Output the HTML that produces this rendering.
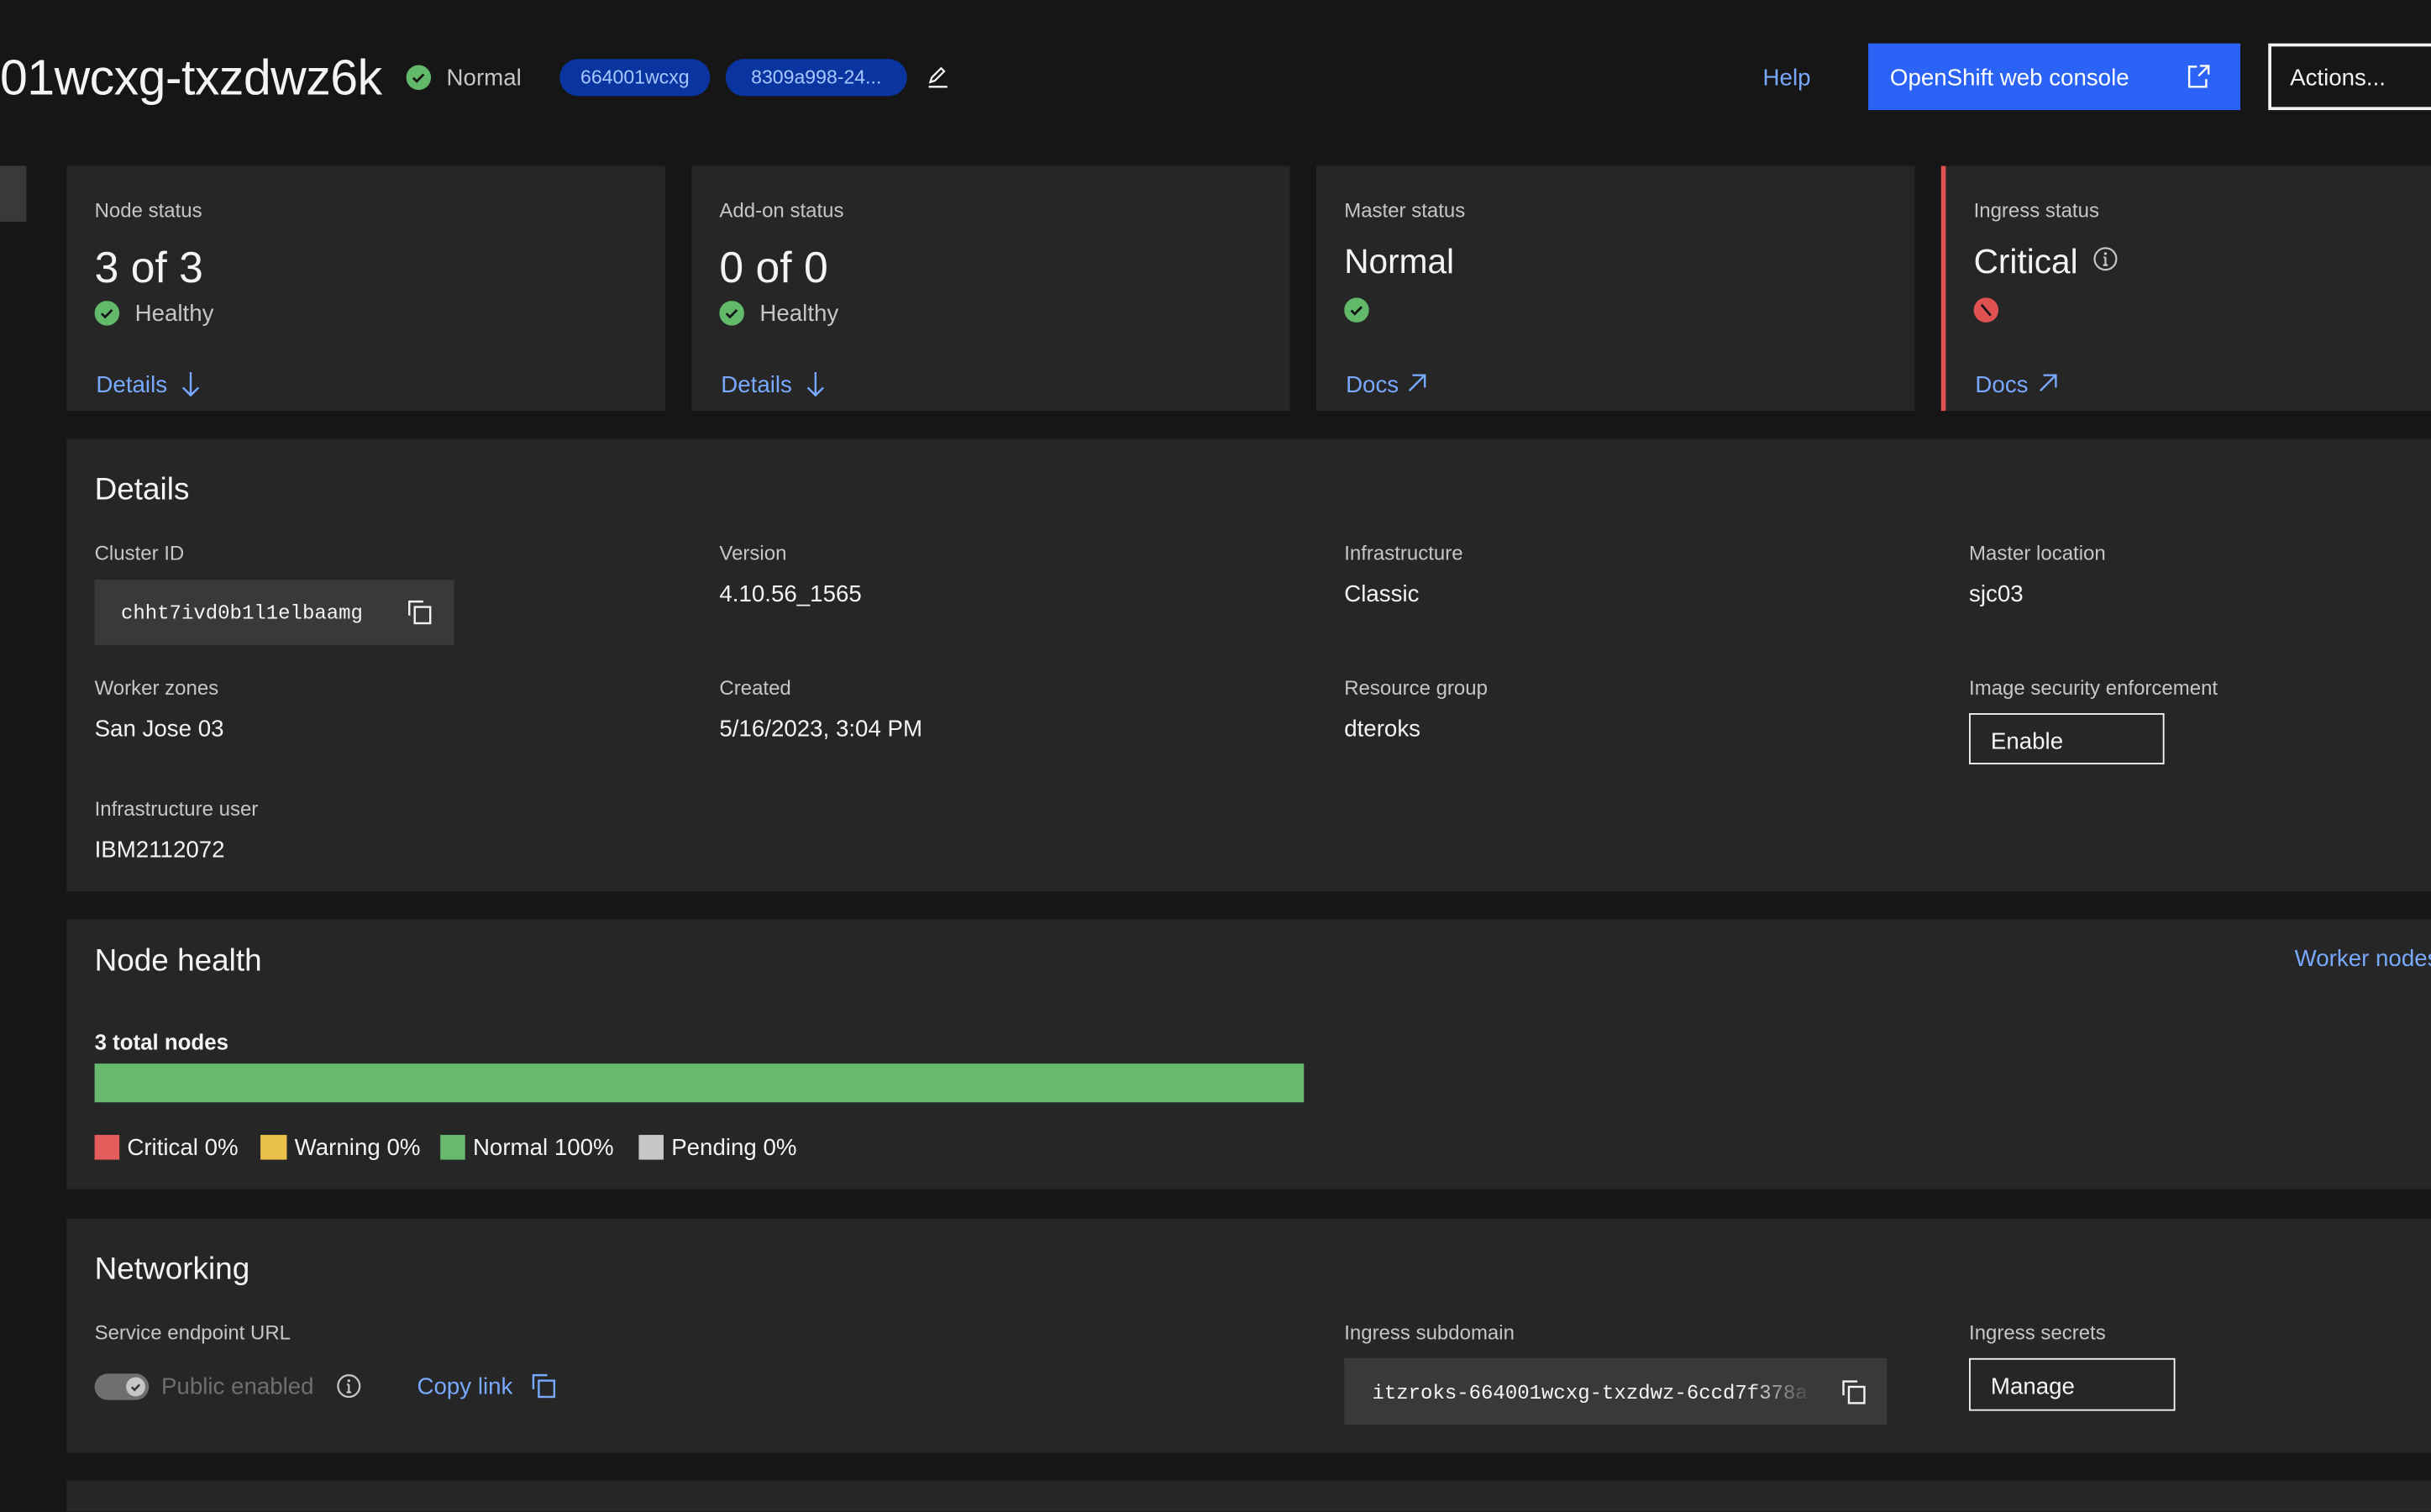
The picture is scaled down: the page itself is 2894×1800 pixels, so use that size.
<!DOCTYPE html>
<html><head><meta charset="utf-8">
<style>
html,body{margin:0;padding:0;background:#161616;overflow:hidden;width:2894px;height:1784px}
#s{position:absolute;left:0;top:0;width:1568px;height:967px;transform:scale(1.8457);transform-origin:0 0;font-family:"Liberation Sans",sans-serif;color:#f4f4f4}
.a{position:absolute;white-space:nowrap}
.card{position:absolute;background:#262626}
.lbl{position:absolute;font-size:13px;color:#c6c6c6;line-height:16px;white-space:nowrap}
.val{position:absolute;font-size:15px;color:#f4f4f4;line-height:18px;white-space:nowrap}
.lnk{color:#78a9ff}
.mono{font-family:"Liberation Mono",monospace}
</style></head><body><div id="s">
<div class="a" style="left:0;top:31px;font-size:32px;line-height:38px;letter-spacing:-0.3px">01wcxg-txzdwz6k</div>
<svg class="a" style="left:262px;top:42px" width="16" height="16"><circle cx="8" cy="8" r="8" fill="#62b96a"/><path d="M4.5 8.2l2.3 2.3 4.5-4.6" stroke="#161616" stroke-width="1.5" fill="none"/></svg>
<div class="a" style="left:288px;top:42px;font-size:15px;color:#c6c6c6;line-height:18px">Normal</div>
<div class="a" style="left:361px;top:38px;width:97px;height:24px;border-radius:12px;background:#0a34a0;color:#a6c8ff;font-size:12.5px;line-height:25px;text-align:center">664001wcxg</div>
<div class="a" style="left:468px;top:38px;width:117px;height:24px;border-radius:12px;background:#0a34a0;color:#a6c8ff;font-size:12.5px;line-height:25px;text-align:center">8309a998-24...</div>
<svg class="a" style="left:597px;top:41px" width="16" height="16"><path d="M3 12l1-3 6-6 2 2-6 6z" stroke="#f4f4f4" stroke-width="1.2" fill="none"/><path d="M2 15h12" stroke="#f4f4f4" stroke-width="1.3"/></svg>
<div class="a lnk" style="left:1137px;top:42px;font-size:15px;line-height:18px">Help</div>
<div class="a" style="left:1205px;top:28px;width:240px;height:43px;background:#2a63f5"></div>
<div class="a" style="left:1219px;top:42px;font-size:15px;line-height:18px;color:#fff">OpenShift web console</div>
<svg class="a" style="left:1410px;top:41px" width="16" height="16"><path d="M7 2H2v13h11v-5" stroke="#fff" stroke-width="1.3" fill="none"/><path d="M9 1.5h5.5V7M14.5 1.5L8 8" stroke="#fff" stroke-width="1.3" fill="none"/></svg>
<div class="a" style="left:1463px;top:28px;width:120px;height:39px;border:2px solid #f4f4f4"></div>
<div class="a" style="left:1477px;top:42px;font-size:15px;line-height:18px">Actions...</div>

<div class="a" style="left:0;top:107px;width:17px;height:36px;background:#393939"></div>

<div class="card" style="left:43px;top:107px;width:386px;height:158px"></div>
<div class="card" style="left:446px;top:107px;width:386px;height:158px"></div>
<div class="card" style="left:849px;top:107px;width:386px;height:158px"></div>
<div class="card" style="left:1252px;top:107px;width:330px;height:158px;border-left:3px solid #e05252;box-sizing:border-box"></div>

<div class="lbl" style="left:61px;top:128px">Node status</div>
<div class="a" style="left:61px;top:157px;font-size:28px;line-height:32px">3 of 3</div>
<svg class="a" style="left:61px;top:194px" width="16" height="16"><circle cx="8" cy="8" r="8" fill="#62b96a"/><path d="M4.5 8.2l2.3 2.3 4.5-4.6" stroke="#161616" stroke-width="1.5" fill="none"/></svg>
<div class="a" style="left:87px;top:194px;font-size:15px;color:#c6c6c6;line-height:18px">Healthy</div>
<div class="a lnk" style="left:62px;top:240px;font-size:15px;line-height:18px">Details</div>
<svg class="a" style="left:116px;top:239px" width="14" height="18"><path d="M7 1v15M2 11l5 5 5-5" stroke="#78a9ff" stroke-width="1.3" fill="none"/></svg>

<div class="lbl" style="left:464px;top:128px">Add-on status</div>
<div class="a" style="left:464px;top:157px;font-size:28px;line-height:32px">0 of 0</div>
<svg class="a" style="left:464px;top:194px" width="16" height="16"><circle cx="8" cy="8" r="8" fill="#62b96a"/><path d="M4.5 8.2l2.3 2.3 4.5-4.6" stroke="#161616" stroke-width="1.5" fill="none"/></svg>
<div class="a" style="left:490px;top:194px;font-size:15px;color:#c6c6c6;line-height:18px">Healthy</div>
<div class="a lnk" style="left:465px;top:240px;font-size:15px;line-height:18px">Details</div>
<svg class="a" style="left:519px;top:239px" width="14" height="18"><path d="M7 1v15M2 11l5 5 5-5" stroke="#78a9ff" stroke-width="1.3" fill="none"/></svg>

<div class="lbl" style="left:867px;top:128px">Master status</div>
<div class="a" style="left:867px;top:156px;font-size:22px;line-height:26px">Normal</div>
<svg class="a" style="left:867px;top:192px" width="16" height="16"><circle cx="8" cy="8" r="8" fill="#62b96a"/><path d="M4.5 8.2l2.3 2.3 4.5-4.6" stroke="#161616" stroke-width="1.5" fill="none"/></svg>
<div class="a lnk" style="left:868px;top:240px;font-size:15px;line-height:18px">Docs</div>
<svg class="a" style="left:907px;top:240px" width="14" height="14"><path d="M2 12L12 2M4 2h8v8" stroke="#78a9ff" stroke-width="1.3" fill="none"/></svg>

<div class="lbl" style="left:1273px;top:128px">Ingress status</div>
<div class="a" style="left:1273px;top:156px;font-size:22px;line-height:26px">Critical</div>
<svg class="a" style="left:1350px;top:159px" width="16" height="16"><circle cx="8" cy="8" r="7" stroke="#c6c6c6" stroke-width="1.2" fill="none"/><path d="M8 7v5M6.5 12h3M6.8 7h1.2" stroke="#c6c6c6" stroke-width="1.2"/><circle cx="8" cy="4.6" r="0.9" fill="#c6c6c6"/></svg>
<svg class="a" style="left:1273px;top:192px" width="16" height="16"><circle cx="8" cy="8" r="8" fill="#e05252"/><path d="M5 4.5l6 7" stroke="#161616" stroke-width="1.5"/></svg>
<div class="a lnk" style="left:1274px;top:240px;font-size:15px;line-height:18px">Docs</div>
<svg class="a" style="left:1314px;top:240px" width="14" height="14"><path d="M2 12L12 2M4 2h8v8" stroke="#78a9ff" stroke-width="1.3" fill="none"/></svg>

<div class="card" style="left:43px;top:283px;width:1540px;height:292px"></div>
<div class="a" style="left:61px;top:304px;font-size:20px;line-height:24px">Details</div>
<div class="lbl" style="left:61px;top:349px">Cluster ID</div>
<div class="a" style="left:61px;top:374px;width:232px;height:42px;background:#393939"></div>
<div class="a mono" style="left:78px;top:388px;font-size:13px;line-height:16px">chht7ivd0b1l1elbaamg</div>
<svg class="a" style="left:263px;top:387px" width="16" height="16"><path d="M1 10V1h9" stroke="#f4f4f4" stroke-width="1.3" fill="none"/><rect x="4.5" y="4.5" width="10" height="10.5" stroke="#f4f4f4" stroke-width="1.3" fill="none"/></svg>
<div class="lbl" style="left:464px;top:349px">Version</div>
<div class="val" style="left:464px;top:375px">4.10.56_1565</div>
<div class="lbl" style="left:867px;top:349px">Infrastructure</div>
<div class="val" style="left:867px;top:375px">Classic</div>
<div class="lbl" style="left:1270px;top:349px">Master location</div>
<div class="val" style="left:1270px;top:375px">sjc03</div>
<div class="lbl" style="left:61px;top:436px">Worker zones</div>
<div class="val" style="left:61px;top:462px">San Jose 03</div>
<div class="lbl" style="left:464px;top:436px">Created</div>
<div class="val" style="left:464px;top:462px">5/16/2023, 3:04 PM</div>
<div class="lbl" style="left:867px;top:436px">Resource group</div>
<div class="val" style="left:867px;top:462px">dteroks</div>
<div class="lbl" style="left:1270px;top:436px">Image security enforcement</div>
<div class="a" style="left:1270px;top:460px;width:124px;height:31px;border:1.5px solid #f4f4f4"></div>
<div class="val" style="left:1284px;top:470px">Enable</div>
<div class="lbl" style="left:61px;top:514px">Infrastructure user</div>
<div class="val" style="left:61px;top:540px">IBM2112072</div>

<div class="card" style="left:43px;top:593px;width:1540px;height:174px"></div>
<div class="a" style="left:61px;top:608px;font-size:20px;line-height:24px">Node health</div>
<div class="a lnk" style="left:1480px;top:610px;font-size:15px;line-height:18px">Worker nodes</div>
<div class="a" style="left:61px;top:664px;font-size:14px;font-weight:bold;line-height:17px">3 total nodes</div>
<div class="a" style="left:61px;top:686px;width:780px;height:25px;background:#67b96e"></div>
<div class="a" style="left:61px;top:732px;width:16px;height:16px;background:#e55c5c"></div>
<div class="val" style="left:82px;top:732px">Critical 0%</div>
<div class="a" style="left:168px;top:732px;width:17px;height:16px;background:#e8c04a"></div>
<div class="val" style="left:190px;top:732px">Warning 0%</div>
<div class="a" style="left:284px;top:732px;width:16px;height:16px;background:#67b96e"></div>
<div class="val" style="left:305px;top:732px">Normal 100%</div>
<div class="a" style="left:412px;top:732px;width:16px;height:16px;background:#c6c6c6"></div>
<div class="val" style="left:433px;top:732px">Pending 0%</div>

<div class="card" style="left:43px;top:786px;width:1540px;height:151px"></div>
<div class="a" style="left:61px;top:807px;font-size:20px;line-height:24px">Networking</div>
<div class="lbl" style="left:61px;top:852px">Service endpoint URL</div>
<div class="a" style="left:61px;top:886px;width:35px;height:17px;border-radius:9px;background:#6f6f6f"></div>
<svg class="a" style="left:81px;top:888px" width="13" height="13"><circle cx="6.5" cy="6.5" r="6.2" fill="#c6c6c6"/><path d="M4 6.7l1.8 1.8 3.2-3.4" stroke="#393939" stroke-width="1.4" fill="none"/></svg>
<div class="a" style="left:104px;top:886px;font-size:15px;line-height:18px;color:#6f6f6f">Public enabled</div>
<svg class="a" style="left:217px;top:886px" width="16" height="16"><circle cx="8" cy="8" r="7" stroke="#c6c6c6" stroke-width="1.2" fill="none"/><path d="M8 7v5M6.5 12h3M6.8 7h1.2" stroke="#c6c6c6" stroke-width="1.2"/><circle cx="8" cy="4.6" r="0.9" fill="#c6c6c6"/></svg>
<div class="a lnk" style="left:269px;top:886px;font-size:15px;line-height:18px">Copy link</div>
<svg class="a" style="left:343px;top:886px" width="16" height="16"><path d="M1 10V1h9" stroke="#78a9ff" stroke-width="1.3" fill="none"/><rect x="4.5" y="4.5" width="10" height="10.5" stroke="#78a9ff" stroke-width="1.3" fill="none"/></svg>
<div class="lbl" style="left:867px;top:852px">Ingress subdomain</div>
<div class="a" style="left:867px;top:876px;width:350px;height:43px;background:#393939"></div>
<div class="a mono" style="left:885px;top:891px;font-size:13px;line-height:16px;width:285px;overflow:hidden;-webkit-mask-image:linear-gradient(to right,#000 85%,transparent);">itzroks-664001wcxg-txzdwz-6ccd7f378a</div>
<svg class="a" style="left:1188px;top:890px" width="16" height="16"><path d="M1 10V1h9" stroke="#f4f4f4" stroke-width="1.3" fill="none"/><rect x="4.5" y="4.5" width="10" height="10.5" stroke="#f4f4f4" stroke-width="1.3" fill="none"/></svg>
<div class="lbl" style="left:1270px;top:852px">Ingress secrets</div>
<div class="a" style="left:1270px;top:876px;width:131px;height:32px;border:1.5px solid #f4f4f4"></div>
<div class="val" style="left:1284px;top:886px">Manage</div>

<div class="card" style="left:43px;top:955px;width:1540px;height:20px"></div>
</div></body></html>
